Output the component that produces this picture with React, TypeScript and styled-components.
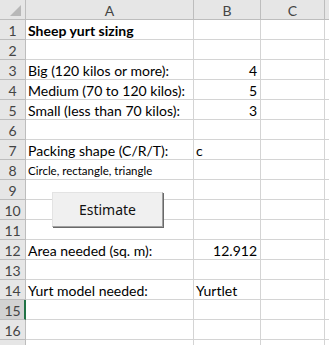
import styled, { createGlobalStyle } from 'styled-components';

const GlobalStyle = createGlobalStyle`
  html, body {
    margin: 0;
    padding: 0;
    background: #fff;
    overflow: hidden;
  }
  body {
    font-family: Lato, 'Liberation Sans', sans-serif;
  }
`;

const ROW_COUNT = 16;

const cells: Record<number, { a?: string; b?: string; bRight?: boolean; bold?: boolean; small?: boolean }> = {
  1: { a: 'Sheep yurt sizing', bold: true },
  3: { a: 'Big (120 kilos or more):', b: '4', bRight: true },
  4: { a: 'Medium (70 to 120 kilos):', b: '5', bRight: true },
  5: { a: 'Small (less than 70 kilos):', b: '3', bRight: true },
  7: { a: 'Packing shape (C/R/T):', b: 'c' },
  8: { a: 'Circle, rectangle, triangle', small: true },
  12: { a: 'Area needed (sq. m):', b: '12.912', bRight: true },
  14: { a: 'Yurt model needed:', b: 'Yurtlet' },
};

const SELECTED_ROW = 15;

const App: React.FC = () => {
  const rows = Array.from({ length: ROW_COUNT }, (_, i) => i + 1);

  return (
    <>
      <GlobalStyle />
      <Workbook>
        <Sheet>
          <Corner>
            <svg width="26" height="20" viewBox="0 0 26 20">
              <polygon points="21,5 21,16 10,16" fill="#b8b8b8" />
            </svg>
          </Corner>
          <ColHeader>A</ColHeader>
          <ColHeader>B</ColHeader>
          <ColHeader>C</ColHeader>
          <ColHeader />
          {rows.map((r) => {
            const row = cells[r] || {};
            return (
              <Row key={r}>
                <RowHeader selected={r === SELECTED_ROW}>{r}</RowHeader>
                <Cell bold={row.bold} small={row.small}>
                  {row.a}
                </Cell>
                <Cell right={row.bRight}>{row.b}</Cell>
                <Cell />
                <Cell />
              </Row>
            );
          })}
          {/* row 17, only its top edge is in view */}
          <Row>
            <RowHeader />
            <Cell />
            <Cell />
            <Cell />
            <Cell />
          </Row>
        </Sheet>
        <EstimateButton>Estimate</EstimateButton>
      </Workbook>
    </>
  );
};

const Workbook = styled.div`
  position: relative;
  width: 329px;
  height: 345px;
  overflow: hidden;
`;

const Sheet = styled.div`
  display: grid;
  grid-template-columns: 26px 168px 67px 64px 1fr;
  grid-auto-rows: 20px;
  font-size: 14px;
  color: #000;
`;

const Row = styled.div`
  display: contents;
`;

const Corner = styled.div`
  background: #e6e6e6;
  border-right: 1px solid #bdbdbd;
  border-bottom: 1px solid #bdbdbd;
  box-sizing: border-box;
  svg {
    display: block;
  }
`;

const ColHeader = styled.div`
  display: flex;
  align-items: center;
  justify-content: center;
  box-sizing: border-box;
  background: #e6e6e6;
  border-right: 1px solid #bdbdbd;
  border-bottom: 1px solid #bdbdbd;
  color: #444;
  font-size: 14px;
  padding-top: 1px;
`;

const RowHeader = styled.div<{ selected?: boolean }>`
  display: flex;
  align-items: center;
  justify-content: center;
  box-sizing: border-box;
  background: ${({ selected }) => (selected ? '#d2d2d2' : '#e6e6e6')};
  border-bottom: 1px solid #bdbdbd;
  border-right: ${({ selected }) => (selected ? '2px solid #217346' : '1px solid #bdbdbd')};
  color: #444;
  font-size: 14px;
  padding-top: 1px;
  padding-left: ${({ selected }) => (selected ? '1px' : '0')};
`;

const Cell = styled.div<{ right?: boolean; bold?: boolean; small?: boolean }>`
  display: flex;
  align-items: center;
  justify-content: ${({ right }) => (right ? 'flex-end' : 'flex-start')};
  box-sizing: border-box;
  border-right: 1px solid #d4d4d4;
  border-bottom: 1px solid #d4d4d4;
  padding: 1px 3px 0 2px;
  white-space: nowrap;
  overflow: visible;
  font-weight: ${({ bold }) => (bold ? 700 : 400)};
  font-size: ${({ small }) => (small ? '11.5px' : '14px')};
`;

const EstimateButton = styled.div`
  position: absolute;
  left: 52px;
  top: 192px;
  width: 111px;
  height: 35px;
  box-sizing: border-box;
  display: flex;
  align-items: center;
  justify-content: center;
  background: #f0f0f0;
  border-top: 1px solid #e3e3e3;
  border-left: 1px solid #e3e3e3;
  border-right: 1px solid #a0a0a0;
  border-bottom: 1px solid #a0a0a0;
  box-shadow: 1px 1px 0 #696969;
  font-family: 'Noto Sans', 'Liberation Sans', sans-serif;
  font-size: 14px;
  color: #111;
`;

export default App;
